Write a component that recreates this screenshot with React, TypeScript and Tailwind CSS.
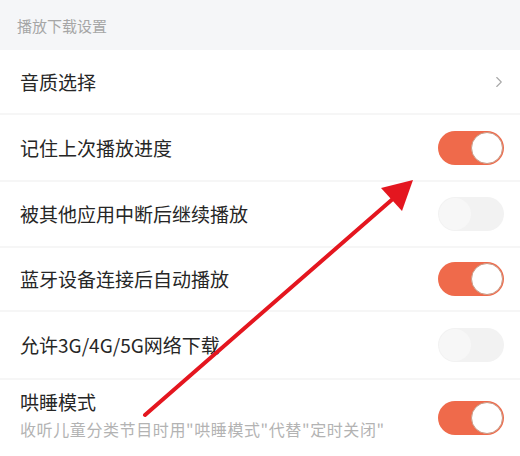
import { ChevronRight } from "lucide-react";

type Row = {
  title: string;
  sub?: string;
  h: string;
  kind: "link" | "on" | "off";
};

const rows: Row[] = [
  { title: "音质选择", h: "h-[65px]", kind: "link" },
  { title: "记住上次播放进度", h: "h-[67px]", kind: "on" },
  { title: "被其他应用中断后继续播放", h: "h-[66px]", kind: "off" },
  { title: "蓝牙设备连接后自动播放", h: "h-[64px]", kind: "on" },
  { title: "允许3G/4G/5G网络下载", h: "h-[68px]", kind: "off" },
  {
    title: "哄睡模式",
    sub: '收听儿童分类节目时用"哄睡模式"代替"定时关闭"',
    h: "h-[76px]",
    kind: "on",
  },
];

function Toggle({ on }: { on: boolean }) {
  return (
    <div
      className={`w-[66px] h-[34px] rounded-full flex items-center px-[1px] ${
        on ? "bg-[#ef6a4b] justify-end" : "bg-[#f2f2f2] justify-start"
      }`}
    >
      <div
        className={`w-[32px] h-[32px] rounded-full ${
          on ? "bg-white border border-[#c79a86]" : "bg-[#f7f7f7]"
        }`}
      />
    </div>
  );
}

export default function App() {
  return (
    <div
      className="relative w-[520px] h-[456px] bg-white overflow-hidden"
      style={{ fontFamily: '"Noto Sans CJK SC", "Noto Sans", sans-serif' }}
    >
      {/* section header */}
      <div className="h-[50px] bg-[#f5f6f8] flex items-center px-[17px] pt-[2px]">
        <span className="text-[15px] text-[#a6a6a6]">播放下载设置</span>
      </div>

      {rows.map((r, i) => (
        <div
          key={r.title}
          className={`${r.h} flex items-center justify-between pl-[20px] pr-[16px] ${
            i < rows.length - 1 ? "border-b-2 border-[#f6f6f6]" : ""
          }`}
        >
          <div className={`flex flex-col ${r.sub ? "-mt-[8px]" : ""}`}>
            <span className="text-[19px] leading-[26px] text-[#262626]">{r.title}</span>
            {r.sub && (
              <span className="text-[16px] leading-[22px] tracking-[0.6px] text-[#b3b3b3] mt-[3px]">
                {r.sub}
              </span>
            )}
          </div>
          {r.kind === "link" ? (
            <ChevronRight size={18} strokeWidth={1.5} className="text-[#a8a8a8] -mr-[4px]" />
          ) : (
            <Toggle on={r.kind === "on"} />
          )}
        </div>
      ))}

      {/* red annotation arrow */}
      <svg
        className="absolute inset-0 pointer-events-none"
        width="520"
        height="456"
        viewBox="0 0 520 456"
      >
        <line x1="145" y1="415" x2="395" y2="197" stroke="#e4161f" strokeWidth="4" strokeLinecap="round" />
        <polygon points="413,180 381,188 402,211" fill="#e4161f" />
      </svg>
    </div>
  );
}
